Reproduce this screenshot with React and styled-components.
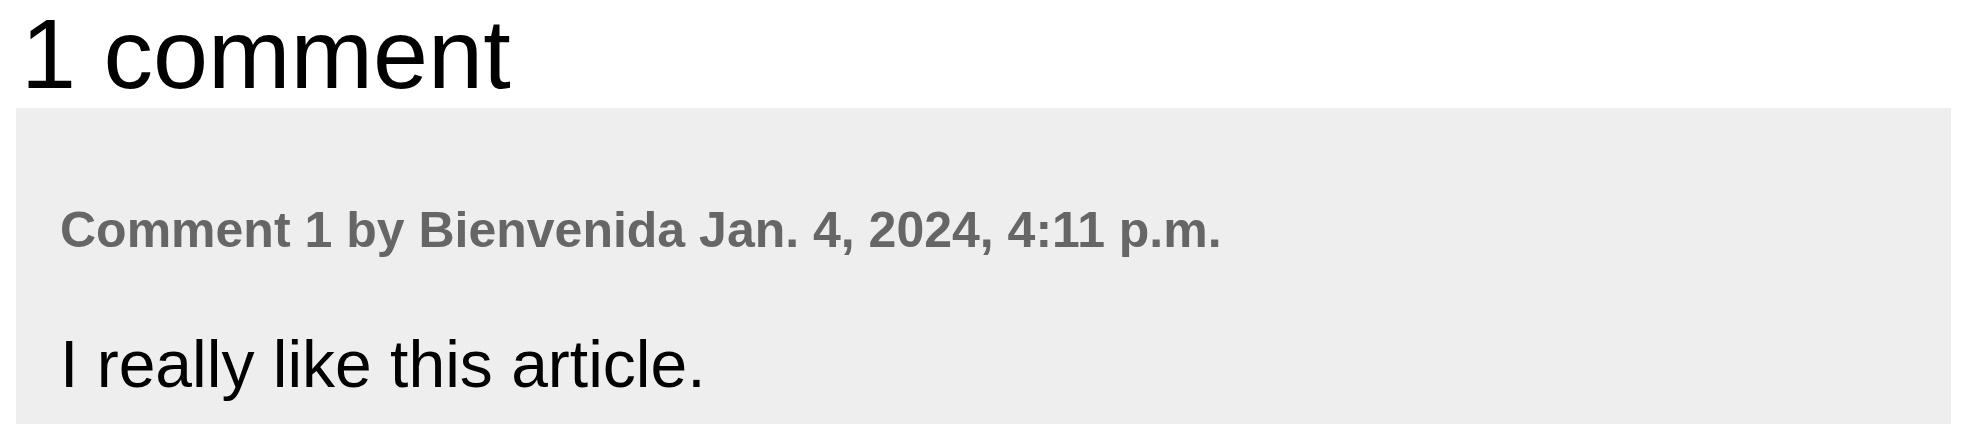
import React from 'react'
import styled, { createGlobalStyle } from 'styled-components'

const GlobalStyle = createGlobalStyle`
    body{
        margin: 0;
        background: #fff;
        font-family: "Liberation Sans", Arial, Helvetica, sans-serif;
    }
`

const comment = {
    number: 1,
    author: 'Bienvenida',
    date: 'Jan. 4, 2024, 4:11 p.m.',
    body: 'I really like this article.',
}

const App = () => {
  return (
        <>
            <GlobalStyle/>
            <Wrapper>
                <Title>1 comment</Title>

                <CommentCard>
                    <p className="comment-meta">
                        Comment {comment.number} by {comment.author} {comment.date}
                    </p>
                    <p className="comment-body">{comment.body}</p>
                </CommentCard>
            </Wrapper>
        </>
  )
}

export default App

const Wrapper = styled.section`
    padding: 0px 22px 0px 16px;
`

const Title = styled.h2`
    margin: 0px 0px 0px 5px;
    padding: 4px 0px 5px;
    font-size: 99px;
    line-height: 1;
    font-weight: normal;
    color: #000;
`

const CommentCard = styled.div`
    box-sizing: border-box;
    background: #eeeeee;
    padding: 97px 44px 0px;
    height: 316px;

    .comment-meta{
        margin: 0px;
        font-size: 50px;
        line-height: 1;
        font-weight: bold;
        color: #666;
    }

    .comment-body{
        margin: 76px 0px 0px;
        font-size: 66px;
        line-height: 1;
        color: #000;
    }
`
